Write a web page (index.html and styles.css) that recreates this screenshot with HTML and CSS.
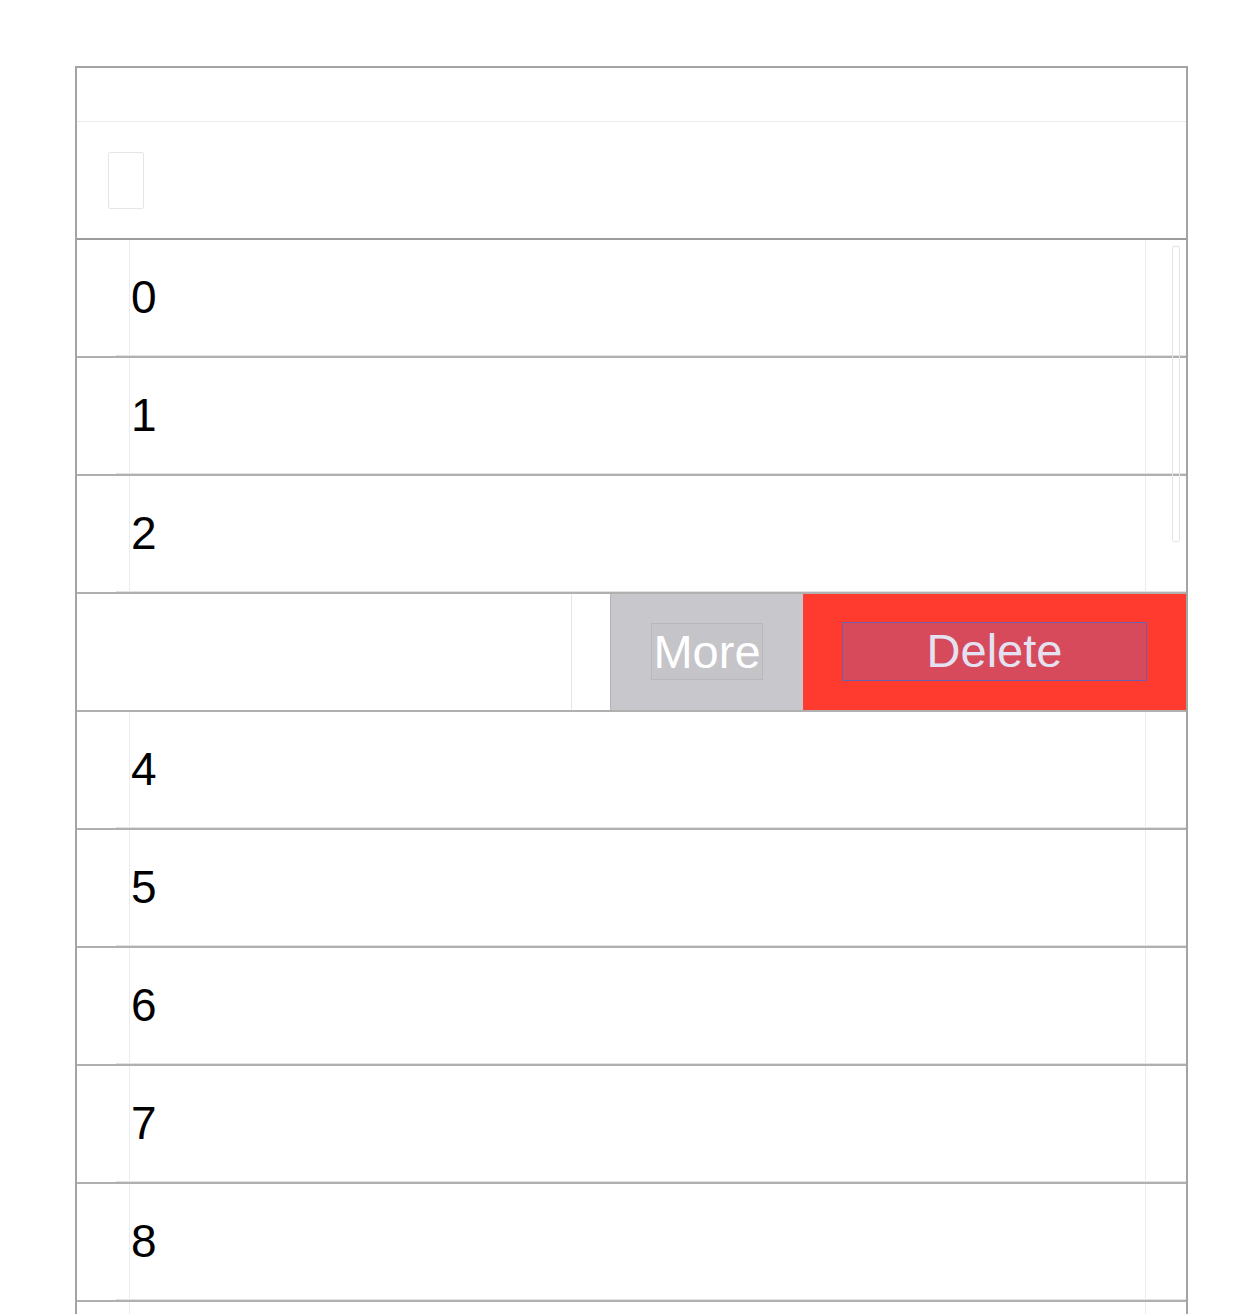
FILE: index.html
```html
<!DOCTYPE html>
<html>
<head>
<meta charset="utf-8">
<link rel="stylesheet" href="styles.css">
</head>
<body>
<div class="frame">
  <div class="head-top"></div>
  <div class="head-main"><div class="placeholder"></div></div>
  <div class="list">
    <div class="scrollbar"></div>
    <div class="row"><div class="gutter"></div><div class="cell">0</div><div class="edge"></div></div>
    <div class="row"><div class="gutter"></div><div class="cell">1</div><div class="edge"></div></div>
    <div class="row"><div class="gutter"></div><div class="cell">2</div><div class="edge"></div></div>
    <div class="row swipe">
      <div class="rest"></div>
      <div class="rest-pad"></div>
      <div class="btn more"><span class="label">More</span></div>
      <div class="btn delete"><span class="label">Delete</span></div>
    </div>
    <div class="row"><div class="gutter"></div><div class="cell">4</div><div class="edge"></div></div>
    <div class="row"><div class="gutter"></div><div class="cell">5</div><div class="edge"></div></div>
    <div class="row"><div class="gutter"></div><div class="cell">6</div><div class="edge"></div></div>
    <div class="row"><div class="gutter"></div><div class="cell">7</div><div class="edge"></div></div>
    <div class="row"><div class="gutter"></div><div class="cell">8</div><div class="edge"></div></div>
    <div class="row"><div class="gutter"></div><div class="cell"></div><div class="edge"></div></div>
  </div>
</div>
</body>
</html>
```

FILE: styles.css
```css
html, body {
  margin: 0;
  padding: 0;
  background: #ffffff;
  overflow: hidden;
  height: 1314px;
}

body {
  font-family: "Liberation Sans", Arial, sans-serif;
  color: #000;
}

.frame {
  margin: 66px 0 0 75px;
  width: 1113px;
  box-sizing: border-box;
  border: 2px solid #a4a4a4;
  border-bottom: none;
}

.head-top {
  height: 53px;
  border-bottom: 1px solid #ebebeb;
}

.head-main {
  height: 118px;
  border-bottom: 2px solid #9c9c9c;
  box-sizing: border-box;
  padding: 30px 0 0 31px;
}

.placeholder {
  width: 34px;
  height: 55px;
  border: 1px solid #e6e6e6;
  border-radius: 2px;
}

.list {
  position: relative;
}

.scrollbar {
  position: absolute;
  left: 1095px;
  top: 6px;
  width: 6px;
  height: 294px;
  border: 1px solid #e4e4e4;
  border-radius: 2px;
  z-index: 2;
}

.row {
  display: flex;
  height: 118px;
  box-sizing: border-box;
  border-bottom: 2px solid #b0b0b0;
  background: linear-gradient(#e2e2e2, #e2e2e2) no-repeat 39px 115px / 100% 1px;
}

.gutter {
  width: 52px;
  flex: none;
}

.cell {
  flex: 1;
  display: flex;
  align-items: center;
  border-left: 1px solid #ececec;
  padding-left: 1px;
  padding-bottom: 2px;
  font-size: 46px;
}

.edge {
  width: 40px;
  flex: none;
  border-left: 1px solid #ececec;
}

.swipe {
  background: none;
}

.rest {
  width: 494px;
  flex: none;
  border-right: 1px solid #e6e6e6;
}

.rest-pad {
  width: 38px;
  flex: none;
}

.btn {
  display: flex;
  align-items: center;
  justify-content: center;
  font-size: 47px;
  padding-bottom: 1px;
}

.more {
  width: 193px;
  flex: none;
  background: #c7c7cc;
  border-left: 1px solid #b4b4b8;
  box-sizing: border-box;
}

.more .label {
  color: #ffffff;
  border: 1px solid #b7b7bc;
  background: #c4c4c9;
  line-height: 55px;
  padding: 0 1px;
}

.delete {
  flex: 1;
  background: #ff3b30;
}

.delete .label {
  width: 303px;
  height: 57px;
  line-height: 56px;
  text-align: center;
  color: #e4e2f2;
  background: #d64a5c;
  border: 1px solid #6b5fae;
}
```
